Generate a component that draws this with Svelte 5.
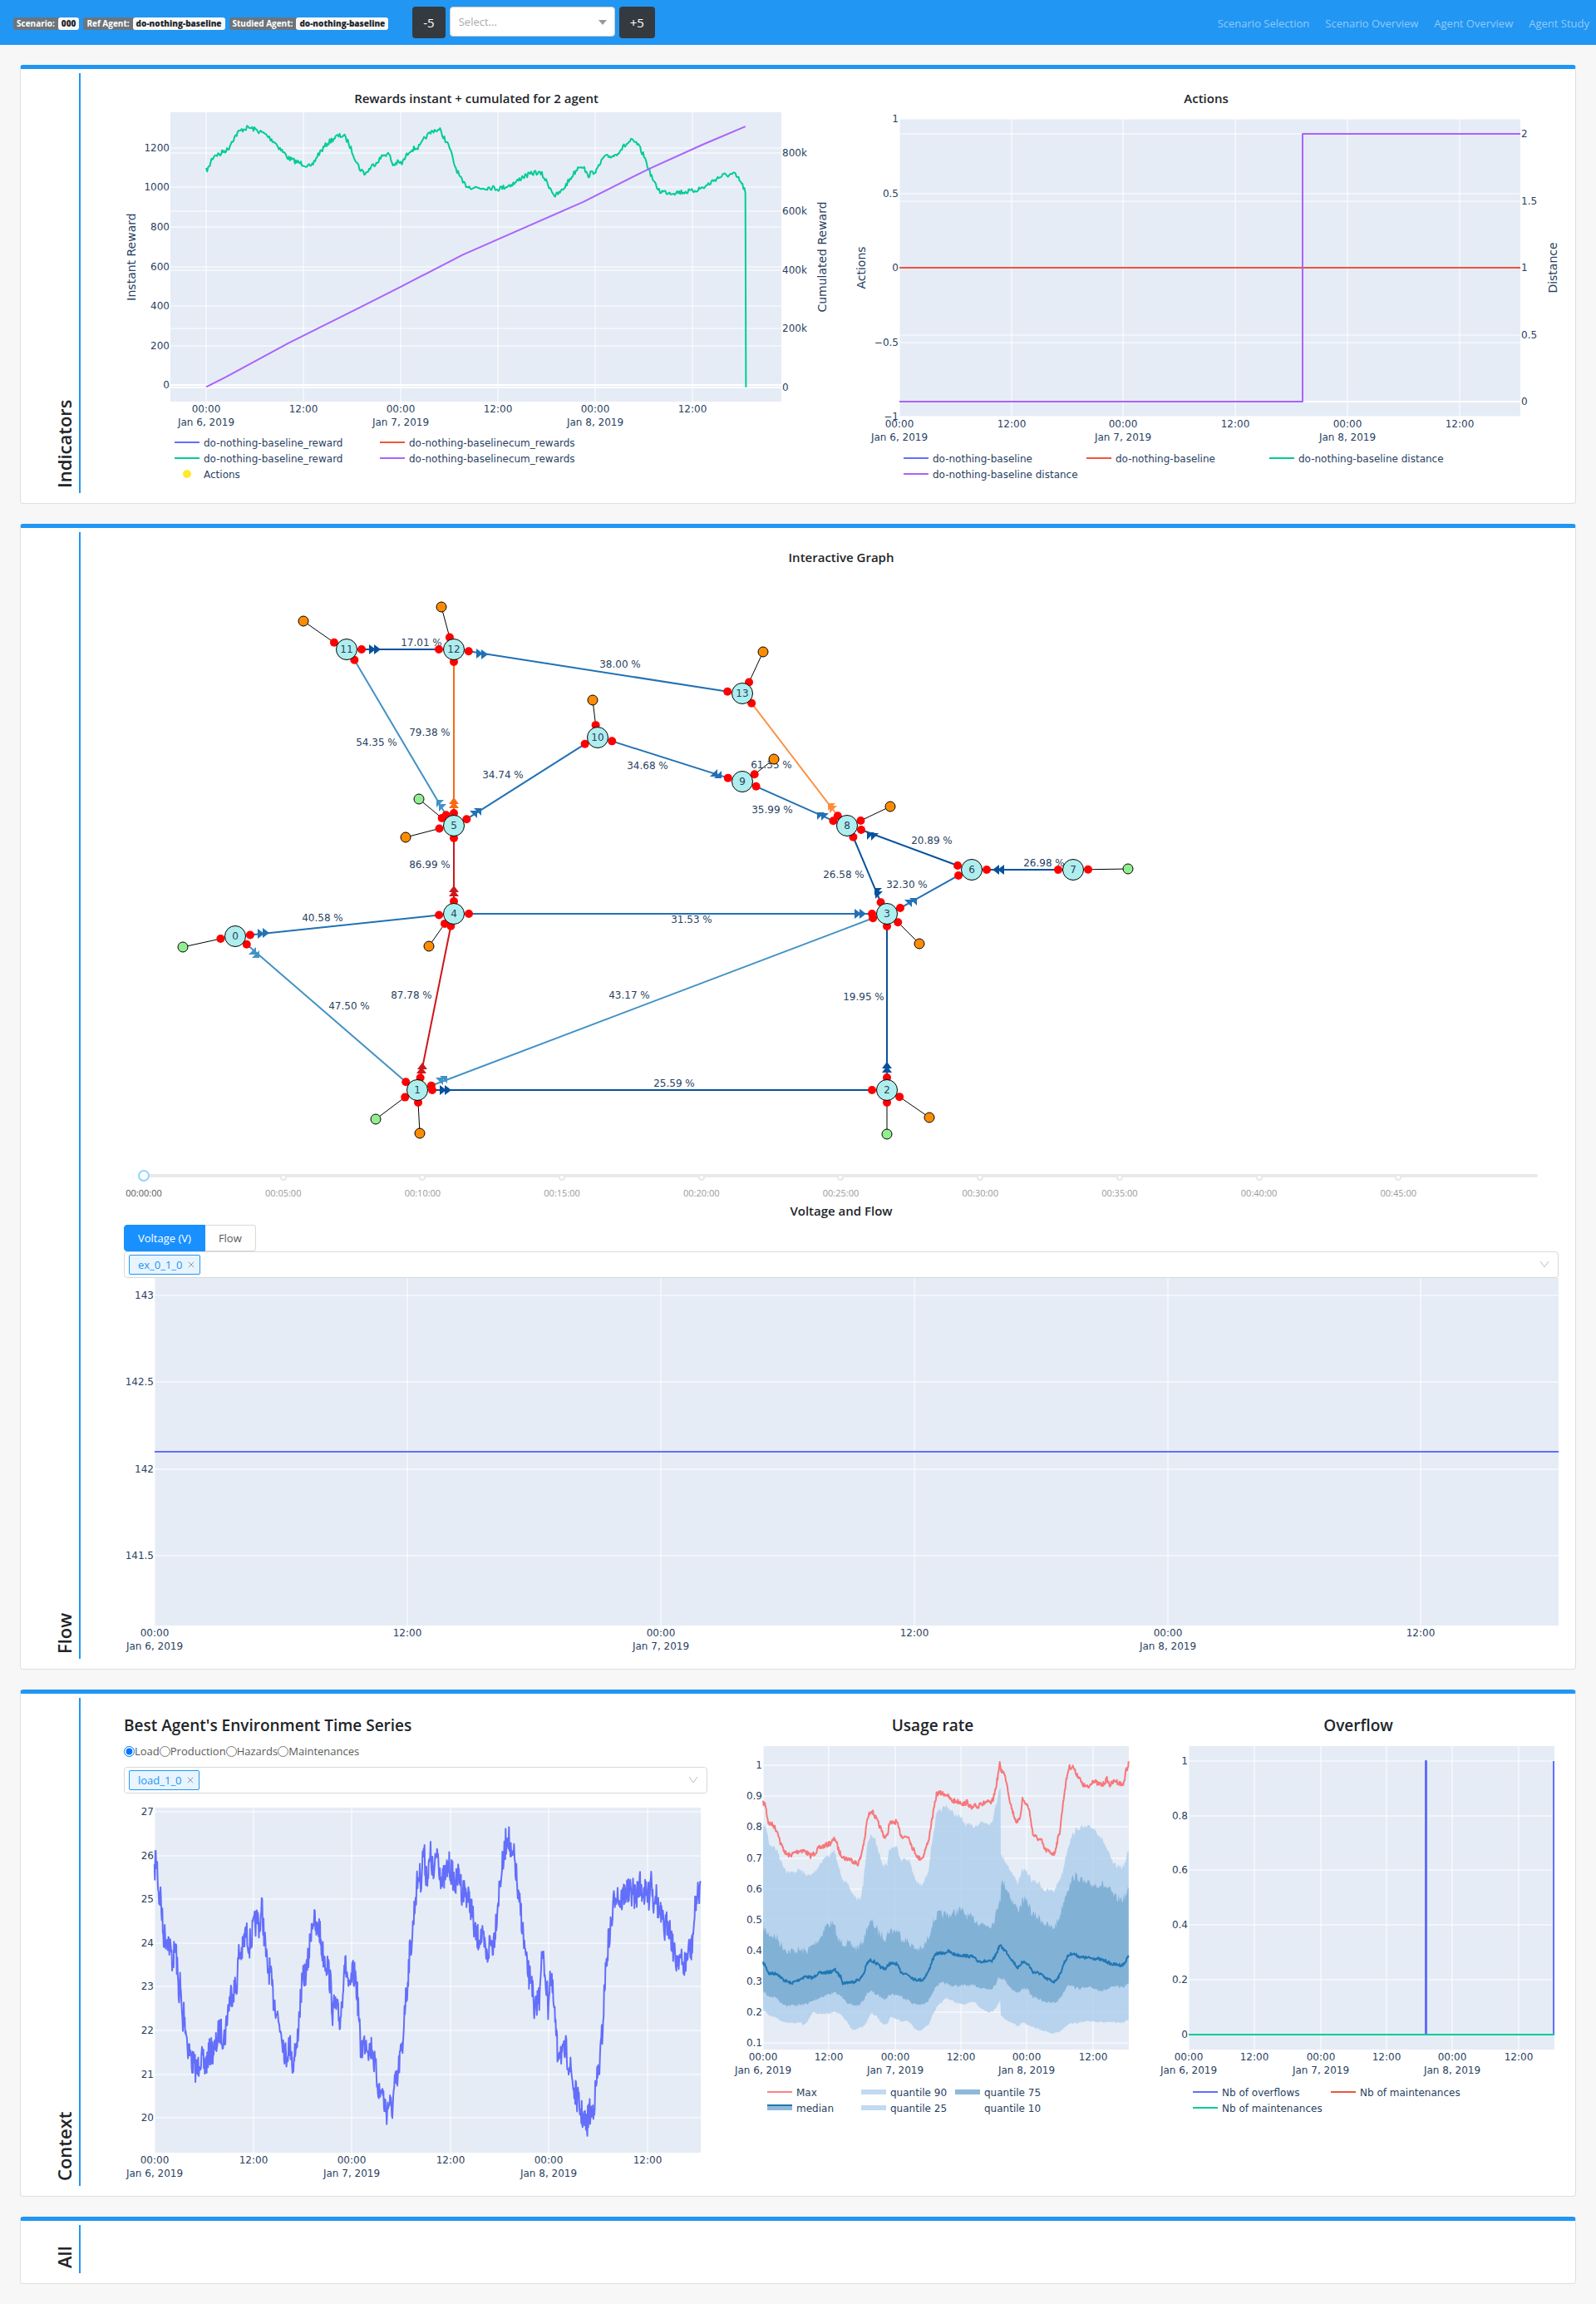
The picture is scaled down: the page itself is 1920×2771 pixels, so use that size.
<script>
  const DATES = ['Jan 6, 2019', 'Jan 7, 2019', 'Jan 8, 2019'];

  // Turns "x,y x,y ..." samples into a densely sampled path with measurement noise.
  function samples(src, [ox, kx], [oy, ky], noise = 0, step = 2) {
    const pts = src.trim().split(/\s+/).map((p) => p.split(',').map(Number));
    let seed = 7;
    const rand = () => {
      seed = (seed * 16807) % 2147483647;
      return seed / 2147483647 - 0.5;
    };
    const out = [];
    for (let i = 0; i < pts.length - 1; i++) {
      const [x1, y1] = pts[i];
      const [x2, y2] = pts[i + 1];
      const n = noise ? Math.max(1, Math.round((x2 - x1) / step)) : 1;
      for (let k = 0; k < n; k++) {
        const t = k / n;
        out.push([x1 + (x2 - x1) * t, y1 + (y2 - y1) * t + rand() * noise]);
      }
    }
    out.push(pts[pts.length - 1]);
    return out.map(([x, y]) => [(ox + x * kx).toFixed(1), (oy + y * ky).toFixed(1)]);
  }
  const line = (pts) => 'M' + pts.map((p) => p.join(',')).join('L');
  const band = (top, bottom) => line([...top, ...bottom.slice().reverse()]) + 'Z';

  const rx = [0, 0.6378];
  const ry = [0, 0.3954];
  const reward = `389,518 394,510 399,485 406,470 415,470 421,460 430,455 437,430 448,405 456,395 464,390 470,388
    484,396 500,408 518,432 530,455 545,482 560,493 575,500 587,510 600,470 618,435 635,415 648,412 656,430 668,475
    678,512 689,529 700,508 712,490 726,468 734,470 741,502 750,494 758,497 765,478 773,457 792,446 802,418 818,396
    830,396 838,420 848,450 858,505 868,540 873,557 885,568 905,572 925,570 940,574 955,567 972,556 985,538 1000,530
    1010,524 1022,530 1030,550 1047,597 1060,580 1075,545 1092,505 1100,505 1108,535 1127,515 1138,480 1160,472
    1175,448 1190,428 1202,438 1215,475 1225,520 1235,560 1245,582 1265,586 1285,584 1305,582 1330,568 1350,544
    1365,533 1385,530 1395,548 1404,575 1406,590 1407,1178`;
  const cumulated = `389,1177 427,1146 545,1043 680,934 756,872 873,775 1100,614 1225,513 1325,440 1406,385`;

  const rewards = {
    name: 'Rewards instant + cumulated for 2 agent',
    box: [149, 130, 848, 450],
    plot: [205, 135, 940, 483],
    xs: [248, 365, 482, 599, 716, 833],
    left: [['1200', 178], ['1000', 225], ['800', 273], ['600', 321], ['400', 368], ['200', 416], ['0', 463]],
    right: [['800k', 184], ['600k', 254], ['400k', 325], ['200k', 395], ['0', 466]],
    zeros: [463, 466],
    titles: [['Instant Reward', 163, 309], ['Cumulated Reward', 994, 309]],
    paths: [
      { d: line(samples(reward, rx, ry, 15)), stroke: '#00cc96' },
      { d: line(samples(cumulated, rx, ry)), stroke: '#ab63fa' }
    ],
    legend: [
      { x: 210, y: 532, text: 'do-nothing-baseline_reward', color: '#636efa' },
      { x: 457, y: 532, text: 'do-nothing-baselinecum_rewards', color: '#ef553b' },
      { x: 210, y: 551, text: 'do-nothing-baseline_reward', color: '#00cc96' },
      { x: 457, y: 551, text: 'do-nothing-baselinecum_rewards', color: '#ab63fa' },
      { x: 210, y: 570, text: 'Actions', color: '#ffe82e', kind: 'dot' }
    ]
  };

  const actions = {
    name: 'Actions',
    box: [1027, 130, 848, 450],
    plot: [1082, 143, 1829, 501],
    xs: [1082, 1217, 1351, 1486, 1621, 1756],
    left: [['1', 143], ['0.5', 233], ['0', 322], ['−0.5', 412], ['−1', 501]],
    right: [['2', 161], ['1.5', 242], ['1', 322], ['0.5', 403], ['0', 483]],
    zeros: [322, 483],
    titles: [['Actions', 1041, 322], ['Distance', 1873, 322]],
    paths: [
      { d: 'M1082,322H1829', stroke: '#ef553b' },
      { d: 'M1082,483H1567V161H1829', stroke: '#ab63fa' }
    ],
    legend: [
      { x: 1087, y: 551, text: 'do-nothing-baseline', color: '#636efa' },
      { x: 1307, y: 551, text: 'do-nothing-baseline', color: '#ef553b' },
      { x: 1527, y: 551, text: 'do-nothing-baseline distance', color: '#00cc96' },
      { x: 1087, y: 570, text: 'do-nothing-baseline distance', color: '#ab63fa' }
    ]
  };

  const voltage = {
    name: 'Voltage',
    box: [149, 1537, 1726, 445],
    plot: [186, 1537, 1875, 1955],
    xs: [186, 490, 795, 1100, 1405, 1709],
    left: [['143', 1558], ['142.5', 1662], ['142', 1767], ['141.5', 1871]],
    paths: [{ d: 'M186,1746H1875', stroke: '#636efa' }]
  };

  const load = `331,500 333,445 337,470 341,550 344,540 350,640 360,650 370,705 377,670 383,790 386,760 392,880 394,830
    402,915 412,960 424,985 428,945 440,975 447,940 462,925 470,880 482,900 487,840 495,790 500,780 507,770 512,690
    520,680 527,635 535,665 545,620 552,600 557,620 562,570 565,625 573,725 578,730 586,800 592,820 597,860 604,880
    607,910 613,950 618,920 625,925 627,985 631,930 636,935 640,860 646,780 652,740 658,730 663,680 668,610 673,600
    678,635 684,620 690,680 697,705 703,720 709,770 713,835 718,820 723,835 729,860 734,790 738,710 745,745 749,795
    755,740 762,745 768,820 773,930 780,915 786,905 792,930 798,920 802,960 808,1000 815,1050 818,1020 823,1060
    829,1085 834,1060 840,1085 846,1020 852,1010 857,950 863,930 867,820 872,790 877,700 884,640 890,550 897,490
    903,500 908,420 912,480 918,490 923,440 930,500 937,425 942,470 948,510 955,490 962,465 970,490 977,515 984,485
    990,530 998,530 1004,550 1010,570 1018,640 1024,650 1030,640 1037,665 1044,700 1050,660 1057,665 1062,620
    1068,550 1075,480 1080,450 1084,410 1089,385 1093,420 1097,460 1101,440 1106,480 1111,555 1117,585 1123,660
    1129,720 1135,750 1140,740 1145,860 1150,810 1156,800 1159,715 1164,700 1169,740 1175,820 1179,740 1185,790
    1190,860 1195,940 1200,920 1206,950 1213,930 1219,960 1225,990 1231,1035 1237,1050 1243,1080 1250,1100 1258,1125
    1262,1085 1268,1090 1274,1060 1280,1000 1286,960 1292,870 1297,750 1304,660 1311,610 1318,540 1323,530 1329,560
    1335,545 1342,530 1349,540 1356,530 1363,550 1370,510 1377,530 1384,540 1391,545 1396,480 1400,560 1405,530
    1412,580 1418,600 1425,630 1432,605 1440,650 1448,710 1456,690 1463,720 1470,710 1476,680 1482,680 1488,610
    1492,550 1497,540 1502,510`;

  const series = {
    name: 'Load time series',
    box: [149, 2157, 702, 459],
    plot: [186, 2174, 843, 2589],
    xs: [186, 305, 423, 542, 660, 779],
    left: [['27', 2179], ['26', 2232], ['25', 2284], ['24', 2337], ['23', 2389], ['22', 2442], ['21', 2495], ['20', 2547]],
    paths: [{ d: line(samples(load, [0, 0.5612], [2020, 0.479], 72, 1)), stroke: '#636efa' }]
  };

  const ux = [880, 1 / 3];
  const uy = [2020, 0.3571];
  const max = `114,416 122,420 127,450 133,482 150,490 168,515 176,550 190,575 197,588 212,592 230,582 250,575 265,578
    285,594 300,585 315,568 335,560 355,552 374,535 382,560 390,583 408,602 425,604 440,612 455,622 466,600 475,560
    481,540 487,485 495,458 505,438 520,465 540,505 552,530 562,528 570,482 580,484 595,478 603,500 612,525 625,530
    640,528 650,560 662,580 674,602 690,600 700,570 710,548 720,490 730,440 740,385 750,382 775,386 795,408 825,412
    838,420 850,412 867,435 880,425 892,430 897,408 905,420 920,412 938,416 945,400 955,360 962,320 968,285 974,308
    980,308 992,340 1003,400 1013,440 1022,465 1032,485 1042,460 1050,402 1060,415 1072,430 1080,470 1088,522
    1100,532 1120,545 1130,572 1150,582 1165,588 1172,560 1185,510 1195,430 1203,370 1212,320 1218,295 1234,294
    1240,310 1255,330 1265,352 1288,365 1305,338 1320,350 1340,355 1355,335 1365,355 1385,340 1410,355 1418,340
    1424,305 1430,298 1433,275`;
  const q90 = `114,490 125,500 137,555 150,560 168,580 180,615 200,645 215,652 245,640 265,655 285,662 310,635 330,605
    350,592 374,580 382,620 400,665 420,695 440,725 455,742 466,735 475,690 482,620 490,560 505,520 520,545 535,590
    550,625 562,620 570,570 595,560 612,605 640,605 655,650 670,685 688,695 700,670 712,635 720,570 730,510 740,455
    755,440 777,425 800,450 825,465 845,488 870,495 900,480 938,482 948,450 958,410 965,370 968,360 971,362 972,595
    985,605 1000,630 1015,655 1032,685 1050,640 1072,655 1085,680 1110,685 1130,710 1165,712 1180,680 1195,650
    1205,600 1215,560 1230,525 1250,500 1275,498 1305,498 1325,520 1345,550 1365,595 1380,625 1410,630 1420,620
    1428,590 1433,578`;
  const q75 = `114,835 130,855 165,870 180,895 205,915 240,912 270,915 300,890 320,870 340,830 362,820 375,840 385,880
    420,890 450,905 465,895 480,870 490,830 507,815 530,850 555,870 570,845 600,845 615,870 640,885 660,905 690,908
    710,870 725,820 745,790 790,792 825,775 850,795 880,810 910,825 940,825 955,790 968,735 971,735 973,685 985,688
    1000,715 1015,750 1035,775 1052,740 1072,755 1085,790 1115,805 1135,825 1160,838 1180,810 1195,760 1210,710
    1225,685 1235,662 1250,665 1280,690 1340,690 1365,710 1385,735 1410,740 1425,725 1433,705`;
  const q25 = `114,1048 130,1065 160,1070 180,1090 205,1098 260,1095 290,1085 320,1070 350,1060 374,1055 410,1075
    420,1095 460,1098 480,1075 490,1055 505,1050 525,1062 550,1075 575,1060 600,1062 640,1080 655,1092 690,1095
    710,1085 720,1062 740,1030 765,1022 800,1032 850,1030 880,1032 920,1042 940,1040 955,1022 965,1003 985,1010
    1005,1035 1032,1057 1050,1040 1070,1045 1085,1068 1120,1080 1150,1090 1175,1085 1195,1060 1215,1025 1245,1040
    1300,1038 1340,1048 1380,1035 1415,1035 1433,1022`;
  const q10 = `114,1112 135,1130 160,1138 180,1150 215,1157 250,1155 260,1165 275,1150 295,1120 310,1125 350,1125
    374,1120 400,1130 415,1150 430,1175 445,1180 480,1165 495,1140 505,1123 525,1135 540,1155 560,1162 575,1135
    600,1145 615,1150 640,1150 660,1175 680,1185 700,1170 712,1160 725,1130 740,1105 775,1072 810,1088 835,1095
    880,1085 900,1108 930,1120 950,1112 967,1083 970,1085 972,1130 990,1145 1035,1167 1050,1155 1080,1168 1120,1180
    1155,1193 1185,1185 1215,1160 1260,1155 1300,1150 1350,1155 1415,1155 1433,1145`;
  const median = `114,955 120,960 135,990 165,990 185,1010 215,1023 235,1015 265,1000 295,1005 310,990 355,985 374,978
    385,992 396,1003 402,1022 420,1020 440,1018 465,1008 480,985 488,958 500,945 515,950 540,970 557,973 570,957
    595,957 612,985 640,995 660,1010 690,1012 710,985 725,945 740,922 765,922 782,915 805,926 870,933 888,948
    940,950 955,925 968,895 990,915 1032,970 1042,967 1048,948 1072,960 1088,985 1115,990 1130,1005 1165,1018
    1185,995 1200,955 1215,930 1230,922 1260,935 1320,940 1350,948 1370,958 1410,962 1420,955 1428,935 1433,935`;

  const usage = {
    name: 'Usage rate',
    box: [881, 2090, 482, 470],
    plot: [918, 2100, 1358, 2465],
    xs: [918, 997, 1077, 1156, 1235, 1315],
    left: [['1', 2123], ['0.9', 2160], ['0.8', 2197], ['0.7', 2235], ['0.6', 2272], ['0.5', 2309], ['0.4', 2346], ['0.3', 2383], ['0.2', 2420], ['0.1', 2457]],
    paths: [
      { d: band(samples(q90, ux, uy, 18, 3), samples(q10, ux, uy, 6, 3)), fill: 'rgba(173, 205, 235, 0.8)' },
      { d: band(samples(q75, ux, uy, 30, 3), samples(q25, ux, uy, 10, 3)), fill: 'rgba(124, 173, 211, 0.9)' },
      { d: line(samples(max, ux, uy, 16, 2)), stroke: '#f8777a' },
      { d: line(samples(median, ux, uy, 10, 2)), stroke: '#1f77b4' }
    ],
    legend: [
      { x: 923, y: 2516, text: 'Max', color: '#fb8184' },
      { x: 1036, y: 2516, text: 'quantile 90', fill: '#c1daf0' },
      { x: 1149, y: 2516, text: 'quantile 75', fill: '#8eb9d9' },
      { x: 923, y: 2535, text: 'median', color: '#1f77b4', fill: '#8eb9d9' },
      { x: 1036, y: 2535, text: 'quantile 25', fill: '#c1daf0' },
      { x: 1149, y: 2535, text: 'quantile 10' }
    ]
  };

  const overflow = {
    name: 'Overflow',
    box: [1393, 2090, 482, 470],
    plot: [1430, 2100, 1870, 2465],
    xs: [1430, 1509, 1589, 1668, 1747, 1827],
    left: [['1', 2118], ['0.8', 2184], ['0.6', 2249], ['0.4', 2315], ['0.2', 2381], ['0', 2447]],
    paths: [
      { d: 'M1715,2447V2118H1716V2447M1869,2447V2118', stroke: '#636efa' },
      { d: 'M1430,2447H1870', stroke: '#00cc96' }
    ],
    legend: [
      { x: 1435, y: 2516, text: 'Nb of overflows', color: '#636efa' },
      { x: 1601, y: 2516, text: 'Nb of maintenances', color: '#ef553b' },
      { x: 1435, y: 2535, text: 'Nb of maintenances', color: '#00cc96' }
    ]
  };

  // Power grid: substations, lines between them, attached loads and generators.
  const nodes = [
    [283, 1126], [502, 1311], [1067, 1311], [1067, 1099], [546, 1099], [546, 993], [1169, 1046],
    [1291, 1046], [1019, 993], [893, 940], [719, 887], [417, 781], [546, 781], [893, 834]
  ];
  const NAVY = '#08519c', BLUE = '#2171b5', SKY = '#4292c6', AMBER = '#fd8d3c', ORANGE = '#f76b15', RED = '#cb181d';
  const edges = [
    [11, 12, NAVY, '17.01 %', 507, 773, 'right', [447, 781], [453, 781]],
    [12, 13, BLUE, '38.00 %', 746, 799, 'right', [576, 786], [582, 787]],
    [11, 5, SKY, '54.35 %', 453, 893, 'nw', [531, 968], [534, 973]],
    [12, 5, ORANGE, '79.38 %', 517, 881, 'up', [546, 964], [546, 969]],
    [5, 10, BLUE, '34.74 %', 605, 932, 'ne', [573, 978], [568, 981]],
    [10, 9, BLUE, '34.68 %', 779, 921, 'se', [857, 928], [862, 930]],
    [13, 8, AMBER, '61.35 %', 928, 920, 'nw', [1002, 972], [1004, 975]],
    [9, 8, BLUE, '35.99 %', 929, 974, 'nw', [989, 983], [994, 984]],
    [6, 8, NAVY, '20.89 %', 1121, 1011, 'nw', [1049, 1007], [1054, 1008]],
    [7, 6, NAVY, '26.98 %', 1256, 1038, 'left', [1199, 1046], [1205, 1046]],
    [8, 3, NAVY, '26.58 %', 1015, 1052, 'nw', [1058, 1074], [1059, 1078]],
    [6, 3, BLUE, '32.30 %', 1091, 1064, 'ne', [1097, 1086], [1091, 1088]],
    [4, 5, RED, '86.99 %', 517, 1040, 'up', [546, 1070], [546, 1075]],
    [4, 3, BLUE, '31.53 %', 832, 1106, 'right', [1031, 1099], [1037, 1099]],
    [0, 4, BLUE, '40.58 %', 388, 1104, 'right', [313, 1123], [319, 1122]],
    [0, 1, SKY, '47.50 %', 420, 1210, 'se', [302, 1142], [306, 1146]],
    [4, 1, RED, '87.78 %', 495, 1197, 'up', [508, 1283], [507, 1288]],
    [1, 3, SKY, '43.17 %', 757, 1197, 'ne', [532, 1300], [527, 1302]],
    [1, 2, NAVY, '25.59 %', 811, 1303, 'right', [532, 1311], [538, 1311]],
    [3, 2, NAVY, '19.95 %', 1039, 1199, 'up', [1067, 1282], [1067, 1287]]
  ];
  const leaves = [
    [0, 220, 1139, 'gen'], [1, 452, 1346, 'gen'], [1, 505, 1363, 'load'], [2, 1118, 1344, 'load'],
    [2, 1067, 1364, 'gen'], [3, 1106, 1135, 'load'], [4, 516, 1138, 'load'], [5, 504, 961, 'gen'],
    [5, 488, 1007, 'load'], [7, 1357, 1045, 'gen'], [8, 1071, 970, 'load'], [9, 931, 913, 'load'],
    [10, 713, 842, 'load'], [11, 365, 747, 'load'], [12, 531, 730, 'load'], [13, 918, 784, 'load']
  ];
  const arrows = {
    up: 'M-6,3H6L0,-5Z',
    right: 'M-3,-6V6L5,0Z',
    left: 'M3,-6V6L-5,0Z',
    nw: 'M-6,3V-6H3Z',
    ne: 'M-3,-6H6V3Z',
    se: 'M6,-3V6H-3Z'
  };
  // Connection points sit on an ellipse around each substation.
  function port([x, y], [tx, ty]) {
    const d = Math.hypot(tx - x, ty - y);
    return [x + ((tx - x) * 18) / d, y + ((ty - y) * 15) / d];
  }
  const wires = edges.map(([a, b, color]) => ({ a: port(nodes[a], nodes[b]), b: port(nodes[b], nodes[a]), color }));
  const stubs = leaves.map(([n, x, y, kind]) => ({ p: port(nodes[n], [x, y]), x, y, kind }));

  const marks = ['00:00:00', '00:05:00', '00:10:00', '00:15:00', '00:20:00', '00:25:00', '00:30:00', '00:35:00', '00:40:00', '00:45:00'];
  const links = ['Scenario Selection', 'Scenario Overview', 'Agent Overview', 'Agent Study'];
  const badges = [['Scenario:', '000'], ['Ref Agent:', 'do-nothing-baseline'], ['Studied Agent:', 'do-nothing-baseline']];
  const kinds = ['Load', 'Production', 'Hazards', 'Maintenances'];
  let step = $state(0);
  let kind = $state('Load');
  let mode = $state('Voltage (V)');
</script>

{#snippet chart(c)}
  {@const [x0, y0, x1, y1] = c.plot}
  <svg class="chart" viewBox={c.box.join(' ')} role="img" aria-label={c.name}>
    <rect x={x0} y={y0} width={x1 - x0} height={y1 - y0} fill="#e5ecf6" />
    <g class="grid">
      {#each c.xs as x}<path d="M{x},{y0}V{y1}" />{/each}
      {#each [...c.left, ...(c.right ?? [])] as [, y]}<path d="M{x0},{y}H{x1}" />{/each}
    </g>
    {#each c.zeros ?? [] as y}<path class="zero" d="M{x0},{y}H{x1}" />{/each}
    {#each c.paths as p}
      <path d={p.d} fill={p.fill ?? 'none'} stroke={p.stroke ?? 'none'} stroke-width="2" stroke-linejoin="round" />
    {/each}
    <g class="middle">
      {#each c.xs as x, i}
        <text {x} y={y1 + 13}>{i % 2 ? '12:00' : '00:00'}</text>
        {#if i % 2 === 0}<text {x} y={y1 + 29}>{DATES[i / 2]}</text>{/if}
      {/each}
      {#each c.titles ?? [] as [text, x, y]}
        <text class="axis" transform="translate({x} {y}) rotate(-90)">{text}</text>
      {/each}
    </g>
    {#each c.left as [text, y]}<text class="end" x={x0 - 1} y={y + 4}>{text}</text>{/each}
    {#each c.right ?? [] as [text, y]}<text x={x1 + 1} y={y + 4}>{text}</text>{/each}
    {#each c.legend ?? [] as l}
      {#if l.kind === 'dot'}
        <circle cx={l.x + 15} cy={l.y} r="5" fill={l.color} />
      {:else}
        {#if l.fill}<rect x={l.x} y={l.y - 3} width="30" height="6" fill={l.fill} />{/if}
        {#if l.color}<path d="M{l.x},{l.fill ? l.y - 3 : l.y}h30" stroke={l.color} stroke-width="2" />{/if}
      {/if}
      <text x={l.x + 35} y={l.y + 5}>{l.text}</text>
    {/each}
  </svg>
{/snippet}

{#snippet picker(tag, label)}
  <div class="picker">
    <span class="tag">{tag}<button type="button" aria-label="Remove {tag}">
      <svg viewBox="0 0 10 10" width="8" height="8"><path d="M1,1L9,9M9,1L1,9" stroke="#6f8798" fill="none" /></svg>
    </button></span>
    <input type="text" aria-label={label} />
    <svg viewBox="0 0 12 12" width="12" height="12"><path d="M1,2L6,9L11,2" stroke="#bfbfbf" fill="none" /></svg>
  </div>
{/snippet}

<header>
  <div class="badges">
    {#each badges as [label, value]}
      <span class="badge">{label} <b>{value}</b></span>
    {/each}
  </div>
  <div class="stepper">
    <button type="button">-5</button>
    <div class="jump">
      <select aria-label="Timestep"><option>Select...</option></select>
      <svg viewBox="0 0 10 6" width="10" height="6"><path d="M0,0H10L5,6Z" fill="#999" /></svg>
    </div>
    <button type="button">+5</button>
  </div>
  <nav>
    {#each links as link}<a href="#top">{link}</a>{/each}
  </nav>
</header>

<main>
  <section>
    <h2>Indicators</h2>
    <div class="body pair">
      <div>
        <h3>{rewards.name}</h3>
        {@render chart(rewards)}
      </div>
      <div>
        <h3>{actions.name}</h3>
        {@render chart(actions)}
      </div>
    </div>
  </section>

  <section>
    <h2>Flow</h2>
    <div class="body">
      <h3>Interactive Graph</h3>
      <svg class="chart" viewBox="149 682 1726 720" role="img" aria-label="Interactive Graph">
        {#each wires as w}
          <path d="M{w.a.join()}L{w.b.join()}" stroke={w.color} stroke-width="2" />
        {/each}
        <g class="middle">
          {#each edges as [, , , text, x, y]}<text {x} y={y + 4}>{text}</text>{/each}
        </g>
        {#each stubs as s}
          <path d="M{s.p.join()}L{s.x},{s.y}" stroke="#000" />
        {/each}
        {#each edges as [, , color, , , , dir, p, q]}
          <path d={arrows[dir]} fill={color} transform="translate({p.join(' ')})" />
          <path d={arrows[dir]} fill={color} transform="translate({q.join(' ')})" />
        {/each}
        <g fill="#f00">
          {#each wires as w}
            <circle cx={w.a[0]} cy={w.a[1]} r="5" />
            <circle cx={w.b[0]} cy={w.b[1]} r="5" />
          {/each}
          {#each stubs as s}<circle cx={s.p[0]} cy={s.p[1]} r="5" />{/each}
        </g>
        {#each stubs as s}
          <circle cx={s.x} cy={s.y} r="6" fill={s.kind === 'gen' ? '#90ee90' : '#ff8c00'} stroke="#000" />
        {/each}
        <g class="middle">
          {#each nodes as [x, y], i}
            <circle cx={x} cy={y} r="12.5" fill="#afeeee" stroke="#000" />
            <text {x} y={y + 4}>{i}</text>
          {/each}
        </g>
      </svg>

      <div class="slider">
        <div class="rail">
          <div class="dots">{#each marks as m}<i title={m}></i>{/each}</div>
          <input type="range" min="0" max="600" bind:value={step} aria-label="Time" />
        </div>
        <ol>{#each marks as m}<li>{m}</li>{/each}</ol>
      </div>

      <h3>Voltage and Flow</h3>
      <div class="modes">
        {#each ['Voltage (V)', 'Flow'] as m}
          <button type="button" class:active={mode === m} onclick={() => (mode = m)}>{m}</button>
        {/each}
      </div>
      {@render picker('ex_0_1_0', 'Lines')}
      {@render chart(voltage)}
    </div>
  </section>

  <section>
    <h2>Context</h2>
    <div class="body trio">
      <div>
        <h4 class="start">Best Agent's Environment Time Series</h4>
        <div class="radios">
          {#each kinds as k}
            <label><input type="radio" name="kind" value={k} bind:group={kind} />{k}</label>
          {/each}
        </div>
        {@render picker('load_1_0', 'Assets')}
        {@render chart(series)}
      </div>
      <div>
        <h4>Usage rate</h4>
        {@render chart(usage)}
      </div>
      <div>
        <h4>Overflow</h4>
        {@render chart(overflow)}
      </div>
    </div>
  </section>

  <section>
    <h2>All</h2>
    <div class="body"></div>
  </section>
</main>

<style>
  :global(body) {
    margin: 0;
    background: #f7f7f7;
    font: 13px/20px 'Open Sans', sans-serif;
    color: #212529;
  }
  header {
    display: flex;
    align-items: center;
    min-height: 54px;
    padding: 0 8px 0 16px;
    background: #2196f3;
    box-sizing: border-box;
  }
  .badges {
    display: flex;
    gap: 5px;
    margin: 3px 29px 0 0;
  }
  .badge {
    display: flex;
    gap: 4px;
    padding-left: 4px;
    border-radius: 3px;
    background: #6c757d;
    color: #fff;
    font-size: 10px;
    font-weight: 700;
    line-height: 15px;
    white-space: nowrap;
  }
  .badge b {
    padding: 0 4px;
    border-radius: 3px;
    background: #f8f9fa;
    color: #212529;
  }
  .stepper {
    display: flex;
    gap: 5px;
    align-items: flex-start;
  }
  .stepper button {
    height: 38px;
    padding: 0 13px;
    border: 0;
    border-radius: 4px;
    background: #343a40;
    color: #fff;
    font: 15px/20px 'Open Sans', sans-serif;
  }
  .jump {
    position: relative;
    width: 199px;
  }
  .jump select {
    display: block;
    width: 100%;
    height: 36px;
    padding: 0 10px;
    border: 1px solid #ccc;
    border-radius: 4px;
    background: #fff;
    color: #aaa;
    font: 13px/20px 'Open Sans', sans-serif;
    appearance: none;
  }
  .jump svg {
    position: absolute;
    right: 10px;
    top: 16px;
    pointer-events: none;
  }
  nav {
    display: flex;
    gap: 19px;
    margin: 2px 0 0 auto;
  }
  nav a {
    color: rgba(255, 255, 255, 0.5);
    text-decoration: none;
    white-space: nowrap;
  }
  main {
    display: flex;
    flex-direction: column;
    gap: 24px;
    padding: 24px;
  }
  section {
    display: flex;
    padding: 5px 20px 12px 0;
    border: 1px solid #dfdfdf;
    border-top: 5px solid #2196f3;
    border-radius: 4px;
    background: #fff;
  }
  h2 {
    flex: none;
    box-sizing: border-box;
    width: 72px;
    margin: 0;
    padding: 6px 0;
    border-left: 2px solid #2196f3;
    font-size: 22px;
    line-height: 36px;
    font-weight: 600;
    writing-mode: vertical-rl;
    transform: rotate(180deg);
    display: flex;
    align-items: flex-end;
    flex-direction: row;
  }
  .body {
    flex: 1;
    min-width: 0;
    min-height: 27px;
    margin-left: 52px;
    padding: 18px 0 13px;
  }
  .pair {
    display: grid;
    grid-template-columns: 1fr 1fr;
    gap: 30px;
  }
  .trio {
    display: grid;
    grid-template-columns: 702fr 482fr 482fr;
    gap: 30px;
  }
  h3,
  h4 {
    margin: 0;
    text-align: center;
    font-size: 15px;
    line-height: 24px;
    font-weight: 600;
  }
  h4 {
    font-size: 19px;
    line-height: 30px;
  }
  .start {
    text-align: left;
  }
  .chart {
    display: block;
    width: 100%;
    height: auto;
    overflow: visible;
  }
  .chart text {
    font: 12px 'DejaVu Sans', sans-serif;
    fill: #2a3f5f;
  }
  .chart .axis {
    font-size: 14px;
  }
  .middle text {
    text-anchor: middle;
  }
  .chart .end {
    text-anchor: end;
  }
  .grid path {
    stroke: #fff;
  }
  .zero {
    stroke: #fff;
    stroke-width: 2;
  }
  .slider {
    padding: 0 25px 0 24px;
  }
  .rail {
    position: relative;
    padding: 10px 0;
  }
  .dots,
  ol {
    display: grid;
    grid-template-columns: repeat(10, 1fr);
    justify-items: center;
  }
  .dots {
    height: 4px;
    align-items: center;
    border-radius: 2px;
    background: #e9e9e9;
  }
  .dots i {
    box-sizing: border-box;
    width: 8px;
    height: 8px;
    border: 2px solid #e8e8e8;
    border-radius: 50%;
    background: #fff;
    justify-self: start;
    margin-left: -4px;
  }
  .rail input {
    position: absolute;
    top: 5px;
    left: -7px;
    width: calc(100% + 14px);
    height: 14px;
    margin: 0;
    background: none;
    appearance: none;
  }
  .rail input::-webkit-slider-thumb {
    appearance: none;
    box-sizing: border-box;
    width: 14px;
    height: 14px;
    border: 2px solid #91d5ff;
    border-radius: 50%;
    background: #fff;
  }
  ol {
    margin: 0 5% 0 -5%;
    padding: 0;
    list-style: none;
    color: #999;
    font-size: 11px;
    line-height: 18px;
  }
  li:first-child {
    color: #595959;
  }
  .modes {
    display: flex;
    margin-top: 5px;
  }
  .modes button {
    height: 32px;
    padding: 0 16px;
    border: 1px solid #d9d9d9;
    border-left: 0;
    border-radius: 0 4px 4px 0;
    background: #fff;
    color: #595959;
    font: 13px/20px 'Open Sans', sans-serif;
  }
  .modes button:first-child {
    border-left: 1px solid #d9d9d9;
    border-radius: 4px 0 0 4px;
  }
  .modes .active,
  .modes .active:first-child {
    border-color: #1890ff;
    background: #1890ff;
    color: #fff;
  }
  .picker {
    display: flex;
    align-items: center;
    box-sizing: border-box;
    height: 32px;
    padding: 0 10px 0 5px;
    border: 1px solid #d9d9d9;
    border-radius: 4px;
    background: #fff;
  }
  .tag {
    display: flex;
    align-items: center;
    box-sizing: border-box;
    height: 24px;
    padding: 0 6px 0 10px;
    border: 1px solid #2196f3;
    border-radius: 2px;
    background: #e8f4fe;
    color: #2196f3;
  }
  .tag button {
    display: flex;
    padding: 0;
    margin-left: 6px;
    border: 0;
    background: none;
  }
  .picker input {
    flex: 1;
    min-width: 0;
    border: 0;
    outline: 0;
    background: none;
  }
  .radios {
    display: flex;
    margin: 6px 0 8px;
    line-height: 21px;
    color: #595959;
  }
  .radios label {
    display: flex;
    align-items: center;
  }
  .radios input {
    width: 13px;
    height: 13px;
    margin: 0;
  }
</style>
